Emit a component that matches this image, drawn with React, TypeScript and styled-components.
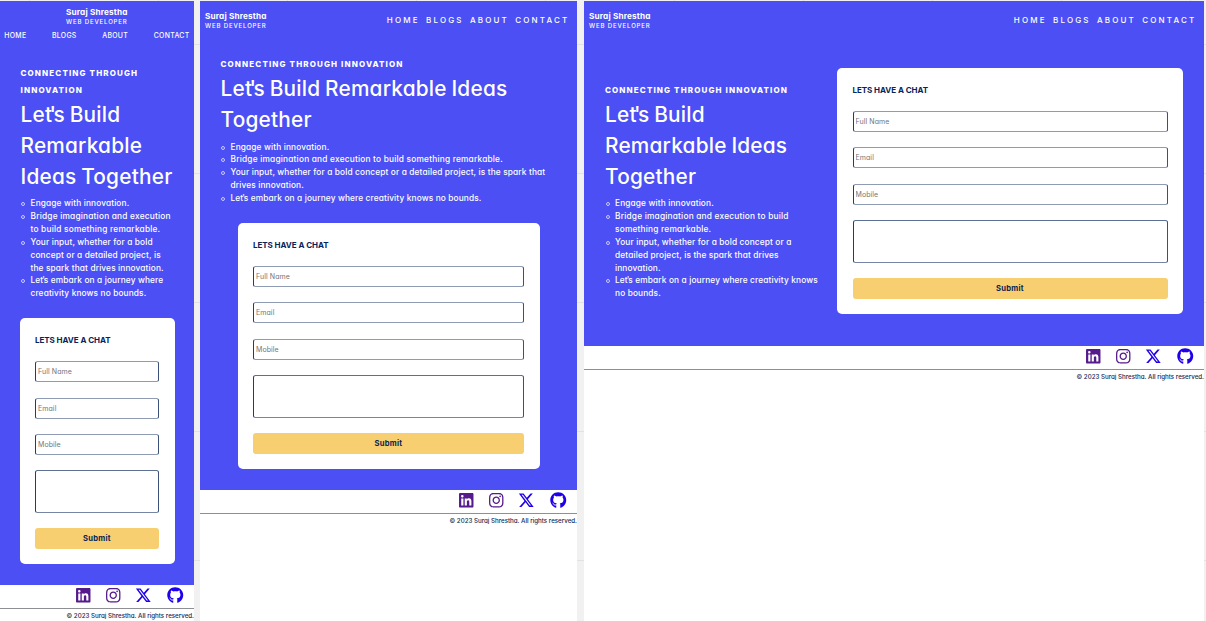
import React from 'react';
import styled, { createGlobalStyle, css } from 'styled-components';
import { FaLinkedin, FaInstagram, FaXTwitter, FaGithub } from 'react-icons/fa6';

type Size = 'mobile' | 'tablet' | 'desktop';

const GlobalStyle = createGlobalStyle`
  *, *::before { box-sizing: border-box; }
  body {
    margin: 0;
    overflow: hidden;
    font-family: Inter, 'Open Sans', sans-serif;
    font-feature-settings: 'cv11';
    background: #f1f1f1;
  }
`;

const Board = styled.main`
  display: grid;
  grid-template-columns: 194px 377px 620px;
  column-gap: 6px;
  width: 1206px;
  height: 621px;
  padding-top: 1px;
  background-color: #f1f1f1;
  background-image:
    linear-gradient(#e2e2e2 1px, transparent 1px),
    linear-gradient(90deg, #e2e2e2 1px, transparent 1px);
  background-size: 129px 129px;
  background-position: 29px 44px;
`;

const Frame = styled.section<{ $size: Size }>`
  display: flex;
  flex-direction: column;
  background: #fff;
  ${(p) => p.$size === 'desktop' && css`margin-left: 1px; margin-right: -1px;`}
`;

const heroHeight = { mobile: 584, tablet: 489, desktop: 345 };

const Hero = styled.div<{ $size: Size }>`
  display: flex;
  flex-direction: column;
  height: ${(p) => heroHeight[p.$size]}px;
  color: #fff;
  background: #4b4ff4;
`;

const Header = styled.header<{ $size: Size }>`
  display: flex;
  ${(p) =>
    p.$size === 'mobile'
      ? css`
          flex-direction: column;
          align-items: center;
          height: 63px;
          padding-top: 6px;
        `
      : css`
          justify-content: space-between;
          height: ${p.$size === 'tablet' ? 54 : 66}px;
          padding: 10px 7.5px 0 5px;
        `}
`;

const Brand = styled.div`
  display: flex;
  flex-direction: column;
  width: 62px;
  white-space: nowrap;
`;

const BrandName = styled.strong`
  font-size: 8.2px;
  font-weight: 650;
  line-height: 11px;
  letter-spacing: 0.17px;
`;

const BrandRole = styled.span`
  font-size: 6.1px;
  font-weight: 450;
  line-height: 8px;
  letter-spacing: 0.82px;
`;

const Nav = styled.nav<{ $size: Size }>`
  display: flex;
  white-space: nowrap;
  ${(p) =>
    p.$size === 'mobile'
      ? css`
          justify-content: space-between;
          width: 100%;
          padding: 4px 4.4px 0 4.2px;
          font-size: 6.9px;
          font-weight: 450;
          line-height: 11px;
          letter-spacing: 0.33px;
        `
      : css`
          gap: 6.2px;
          padding-top: 3px;
          font-size: 8px;
          font-weight: 450;
          line-height: 13px;
          letter-spacing: 2.18px;
        `}
`;

const Content = styled.div<{ $size: Size }>`
  display: flex;
  ${(p) =>
    p.$size === 'desktop'
      ? css`
          align-items: flex-start;
          justify-content: space-between;
          padding: 0 21px;
        `
      : css`
          flex-direction: column;
          align-items: center;
          gap: 18px;
          padding: 0 20px;
        `}
`;

const Pitch = styled.div<{ $size: Size }>`
  ${(p) => (p.$size === 'desktop' ? css`padding-top: 13.5px;` : css`width: 100%;`)}
  padding-left: ${(p) => (p.$size === 'desktop' ? 0 : 0.5)}px;
  white-space: nowrap;
`;

const Kicker = styled.p`
  margin: 0;
  padding-top: 1px;
  font-size: 8px;
  font-weight: 800;
  line-height: 16.5px;
  letter-spacing: 1.12px;
`;

const Title = styled.h1`
  margin: 0.5px 0 5.5px;
  font-size: 20.8px;
  font-weight: 530;
  line-height: 31px;
  letter-spacing: 0.22px;
  word-spacing: -1px;
`;

const Points = styled.ul`
  margin: 0;
  padding: 0;
  list-style: none;
`;

const Point = styled.li`
  display: grid;
  grid-template-columns: 10px auto;
  font-size: 8.3px;
  font-weight: 450;
  line-height: 12.9px;
  letter-spacing: 0.14px;

  &:nth-child(2) {
    letter-spacing: 0.21px;
  }

  &::before {
    content: '';
    width: 4px;
    height: 4px;
    margin: 5px 0 0 0.5px;
    border: 1px solid #c9caff;
    border-radius: 50%;
  }
`;

const Tight = styled.span`
  letter-spacing: -0.12em;
`;

const cardWidth = { mobile: 155, tablet: 302, desktop: 346 };

const Card = styled.form<{ $size: Size }>`
  display: flex;
  flex-direction: column;
  flex-shrink: 0;
  width: ${(p) => cardWidth[p.$size]}px;
  height: 246px;
  padding: 15.6px 15.5px 15px;
  border-radius: 5px;
  background: #fff;
  ${(p) => p.$size === 'desktop' && css`margin-top: 1px;`}
`;

const CardTitle = styled.h2`
  margin: 0 0 14.5px;
  color: #06245a;
  font-size: 8px;
  font-weight: 700;
  line-height: 13px;
  letter-spacing: -0.05px;
  white-space: nowrap;
`;

const fieldBox = css`
  display: block;
  flex-shrink: 0;
  width: 100%;
  border: 1px solid;
  border-color: #8f9bb3 #3c5078 #8f9bb3 #253c69;
  border-radius: 2.5px;
  background: #fff;
  font-family: inherit;
  font-feature-settings: inherit;
  outline: none;
`;

const Field = styled.input`
  ${fieldBox}
  height: 21px;
  margin-bottom: 15.3px;
  padding: 0 2px;
  font-size: 7px;
  letter-spacing: 0.08px;

  &::placeholder {
    color: #757575;
    opacity: 1;
  }
`;

const Message = styled.textarea`
  ${fieldBox}
  height: 43px;
  margin-bottom: 15px;
  border-color: #5d6f92 #3c5078 #7685a3 #253c69;
  resize: none;
`;

const Submit = styled.button`
  flex-shrink: 0;
  height: 21px;
  padding: 0;
  border: 0;
  border-radius: 3px;
  color: #0b2350;
  background: #f7ce70;
  font-family: inherit;
  font-feature-settings: inherit;
  font-size: 7.6px;
  font-weight: 700;
  letter-spacing: 0.25px;
`;

const Footer = styled.footer`
  display: flex;
  flex-direction: column;
`;

const Socials = styled.div`
  display: flex;
  justify-content: flex-end;
  gap: 15.4px;
  height: 24px;
  padding: 2.3px 10.7px 0 0;
  border-bottom: 1px solid #8e8f93;
`;

const Social = styled.a<{ $width: number; $visited?: boolean }>`
  display: flex;
  justify-content: center;
  width: ${(p) => p.$width}px;
  height: 16.5px;
  color: ${(p) => (p.$visited ? '#551a8b' : '#1f00ea')};

  svg {
    flex-shrink: 0;
    width: 16.5px;
    height: 16.5px;
  }
`;

const Copyright = styled.small`
  padding-top: 2px;
  color: #12294f;
  font-size: 6.2px;
  font-weight: 450;
  line-height: 10px;
  letter-spacing: 0;
  text-align: right;
  white-space: nowrap;
`;

interface Copy {
  size: Size;
  kicker: string[];
  title: string[];
  points: string[][];
}

const frames: Copy[] = [
  {
    size: 'mobile',
    kicker: ['CONNECTING THROUGH', 'INNOVATION'],
    title: ["Let's Build", 'Remarkable', 'Ideas Together'],
    points: [
      ['Engage with innovation.'],
      ['Bridge imagination and execution', 'to build something remarkable.'],
      ['Your input, whether for a bold', 'concept or a detailed project, is', 'the spark that drives innovation.'],
      ["Let's embark on a journey where", 'creativity knows no bounds.'],
    ],
  },
  {
    size: 'tablet',
    kicker: ['CONNECTING THROUGH INNOVATION'],
    title: ["Let's Build Remarkable Ideas", 'Together'],
    points: [
      ['Engage with innovation.'],
      ['Bridge imagination and execution to build something remarkable.'],
      ['Your input, whether for a bold concept or a detailed project, is the spark that', 'drives innovation.'],
      ["Let's embark on a journey where creativity knows no bounds."],
    ],
  },
  {
    size: 'desktop',
    kicker: ['CONNECTING THROUGH INNOVATION'],
    title: ["Let's Build", 'Remarkable Ideas', 'Together'],
    points: [
      ['Engage with innovation.'],
      ['Bridge imagination and execution to build', 'something remarkable.'],
      ['Your input, whether for a bold concept or a', 'detailed project, is the spark that drives', 'innovation.'],
      ["Let's embark on a journey where creativity knows", 'no bounds.'],
    ],
  },
];

// Closes the wide gap that the straight apostrophe leaves in "Let's".
const Line = ({ text }: { text: string }) => {
  const [before, after] = text.split("t's");
  return after === undefined ? <>{text}</> : <>{before}<Tight>t'</Tight>s{after}</>;
};

const Lines = ({ lines }: { lines: string[] }) => (
  <span>
    {lines.map((line, i) => (
      <React.Fragment key={line}>
        {i > 0 && <br />}
        <Line text={line} />
      </React.Fragment>
    ))}
  </span>
);

const Page = ({ size, kicker, title, points }: Copy) => (
  <Frame $size={size}>
    <Hero $size={size}>
      <Header $size={size}>
        <Brand>
          <BrandName>Suraj Shrestha</BrandName>
          <BrandRole>WEB DEVELOPER</BrandRole>
        </Brand>
        <Nav $size={size}>
          <span>HOME</span>
          <span>BLOGS</span>
          <span>ABOUT</span>
          <span>CONTACT</span>
        </Nav>
      </Header>
      <Content $size={size}>
        <Pitch $size={size}>
          <Kicker><Lines lines={kicker} /></Kicker>
          <Title><Lines lines={title} /></Title>
          <Points>
            {points.map((p) => (
              <Point key={p[0]}><Lines lines={p} /></Point>
            ))}
          </Points>
        </Pitch>
        <Card $size={size}>
          <CardTitle>LETS HAVE A CHAT</CardTitle>
          <Field placeholder="Full Name" />
          <Field placeholder="Email" />
          <Field placeholder="Mobile" />
          <Message />
          <Submit type="button">Submit</Submit>
        </Card>
      </Content>
    </Hero>
    <Footer>
      <Socials>
        <Social $width={14.4} $visited><FaLinkedin /></Social>
        <Social $width={14.4} $visited><FaInstagram /></Social>
        <Social $width={16.5}><FaXTwitter /></Social>
        <Social $width={16}><FaGithub /></Social>
      </Socials>
      <Copyright>© 2023 Suraj Shrestha. All rights reserved.</Copyright>
    </Footer>
  </Frame>
);

export default function App() {
  return (
    <>
      <GlobalStyle />
      <Board>
        {frames.map((f) => (
          <Page key={f.size} {...f} />
        ))}
      </Board>
    </>
  );
}
